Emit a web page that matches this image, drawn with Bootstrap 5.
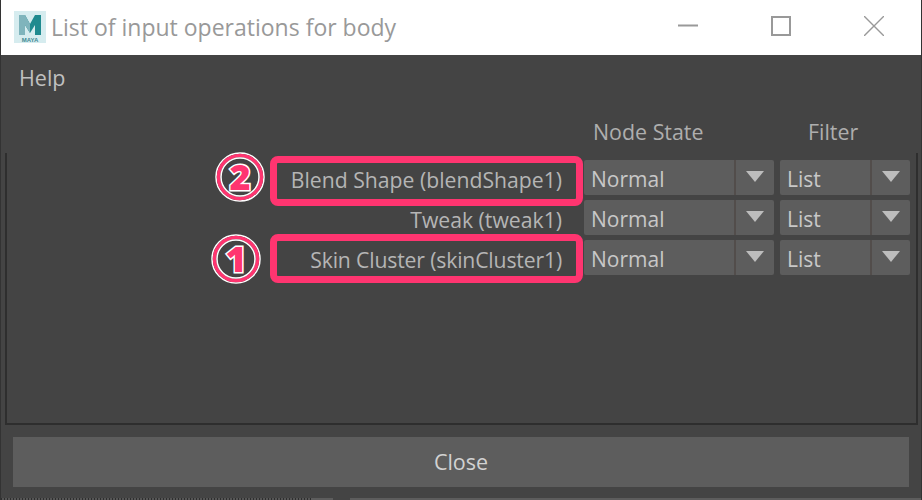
<!DOCTYPE html>
<html lang="en"><head><meta charset="utf-8"><title>List of input operations for body</title>
<link href="https://cdn.jsdelivr.net/npm/bootstrap@5.3.0/dist/css/bootstrap.min.css" rel="stylesheet">
<style>
html,body{margin:0;height:500px;overflow:hidden;background:#444}
body{font-family:"Open Sans","Noto Sans","Liberation Sans",sans-serif;font-size:21px;color:#bdbdbd;line-height:1}
.win{width:922px;height:500px;background:#444;border-left:1px solid #333;border-right:1px solid #333}
.tbar{height:55px;background:#fff;color:#999;font-size:23px}
.logo{width:32px;height:32px;margin-left:13px;margin-right:5px;flex:none;margin-top:-2px}
.logo text{font:700 6px "Liberation Sans",sans-serif;fill:#3e8a94;text-anchor:middle}
.capbtns{margin-left:auto;margin-right:1px}
.capbtn{width:93px;height:55px;padding-bottom:4px}
.helpbar{height:46px;padding-left:18px;color:#c0c0c0;font-size:21.5px}
.heads{height:52px;padding-top:20px}
.hd-node{position:absolute;left:592px;color:#aeaeae;font-size:21.4px}
.hd-filter{position:absolute;left:807px;color:#aeaeae;font-size:21.4px}
.panel{margin-left:4px;width:913px;height:272px;border:solid #2e2e2e;border-width:0 2px 2px 2px;padding-top:7px}
.oprow{height:35px;margin-bottom:5px}
.oplabel{width:556px;padding-right:1px;padding-top:4px;text-align:right;position:relative;color:#b5b5b5;flex:none;font-size:21.2px}
.lbl-tight{letter-spacing:-.16px}
.combo{height:35px;background:#5d5d5d;border-radius:2px;color:#c8c8c8;flex:none;padding-left:7px}
.c-node{width:190px;margin-left:21px}
.c-filter{width:130px;margin-left:6px}
.combo-txt{flex:1 1 auto;height:100%;border-right:2px solid #524d4b;padding-top:3px}
.combo-arr{flex:none;height:100%;padding-bottom:3px}
.c-node .combo-arr,.c-filter .combo-arr{width:38px}
.outline{position:absolute;border:7px solid #ff3570;border-radius:8px;width:313px;height:50px;left:263px;top:-4px;pointer-events:none}
.outline2{height:49px;top:-6px}
.numbadge{position:absolute;width:50px;height:50px;pointer-events:none}
.numbadge text{font:800 36px "Open Sans",sans-serif;fill:#ff3570;stroke:#fff;stroke-width:3px;paint-order:stroke;text-anchor:middle}
.nb2{left:208px;top:-8px}
.nb1{left:204px;top:-6px}
.closebtn{display:block;margin:12px 0 0 12px;width:896px;height:50px;background:#5d5d5d;border:0;border-radius:0;color:#d2d2d2;font-size:21.5px;line-height:50px;padding:0;text-align:center}
.edgebar{height:2px;margin-top:auto}
.eb-dots{width:310px;background:repeating-linear-gradient(90deg,#2e2e2e 0 1px,#555 1px 3px)}
.eb-mid{width:22px;background:#5d5d5d}
.eb-gap{width:17px;background:#444}
.eb-rest{flex:1 1 auto;background:#5d5d5d}
</style></head><body>
<div class="win d-flex flex-column">
 <div class="tbar d-flex align-items-center">
  <svg class="logo" viewBox="0 0 32 32"><rect width="32" height="32" fill="#d6ecef"/><path d="M5 4h6l5 9 5-9h6v20h-6V14l-5 8-5-8v10H5z" fill="#1f8a8f"/><path d="M5 4h6l5 9v9l-5-8v10H5z" fill="#7fb4bc"/><text x="16" y="31">MAYA</text></svg>
  <span>List of input operations for body</span>
  <div class="capbtns d-flex">
   <div class="capbtn d-flex align-items-center justify-content-center"><svg width="20" height="20" viewBox="0 0 20 20"><path d="M0 9.5h20" stroke="#999" stroke-width="2"/></svg></div>
   <div class="capbtn d-flex align-items-center justify-content-center"><svg width="20" height="20" viewBox="0 0 20 20"><rect x="1" y="1" width="18" height="18" fill="none" stroke="#999" stroke-width="2"/></svg></div>
   <div class="capbtn d-flex align-items-center justify-content-center"><svg width="20" height="20" viewBox="0 0 20 20"><path d="M0 0l20 20M20 0L0 20" stroke="#999" stroke-width="1.4"/></svg></div>
  </div>
 </div>
 <div class="helpbar d-flex align-items-center">Help</div>
 <div class="heads position-relative"><span class="hd-node">Node State</span><span class="hd-filter">Filter</span></div>
 <div class="panel">
  <div class="oprow d-flex align-items-center position-relative">
   <div class="oplabel">Blend Shape (blendShape1)</div>
   <span class="outline"></span>
   <svg class="numbadge nb2" viewBox="0 0 50 50"><circle cx="25" cy="25" r="24" fill="#444" stroke="#fff" stroke-width="1.5"/><circle cx="25" cy="25" r="21.5" fill="none" stroke="#ff3570" stroke-width="3.5"/><circle cx="25" cy="25" r="19" fill="none" stroke="#fff" stroke-width="1.5"/><text x="25" y="38">2</text></svg>
   <div class="combo c-node d-flex align-items-center"><span class="combo-txt d-flex align-items-center">Normal</span><span class="combo-arr d-flex align-items-center justify-content-center"><svg width="18" height="11" viewBox="0 0 18 11"><path d="M0 0h18L9 11z" fill="#bdbdbd"/></svg></span></div>
   <div class="combo c-filter d-flex align-items-center"><span class="combo-txt d-flex align-items-center">List</span><span class="combo-arr d-flex align-items-center justify-content-center"><svg width="18" height="11" viewBox="0 0 18 11"><path d="M0 0h18L9 11z" fill="#bdbdbd"/></svg></span></div>
  </div>
  <div class="oprow d-flex align-items-center position-relative">
   <div class="oplabel">Tweak (tweak1)</div>
   <div class="combo c-node d-flex align-items-center"><span class="combo-txt d-flex align-items-center">Normal</span><span class="combo-arr d-flex align-items-center justify-content-center"><svg width="18" height="11" viewBox="0 0 18 11"><path d="M0 0h18L9 11z" fill="#bdbdbd"/></svg></span></div>
   <div class="combo c-filter d-flex align-items-center"><span class="combo-txt d-flex align-items-center">List</span><span class="combo-arr d-flex align-items-center justify-content-center"><svg width="18" height="11" viewBox="0 0 18 11"><path d="M0 0h18L9 11z" fill="#bdbdbd"/></svg></span></div>
  </div>
  <div class="oprow d-flex align-items-center position-relative">
   <div class="oplabel lbl-tight">Skin Cluster (skinCluster1)</div>
   <span class="outline outline2"></span>
   <svg class="numbadge nb1" viewBox="0 0 50 50"><circle cx="25" cy="25" r="24" fill="#444" stroke="#fff" stroke-width="1.5"/><circle cx="25" cy="25" r="21.5" fill="none" stroke="#ff3570" stroke-width="3.5"/><circle cx="25" cy="25" r="19" fill="none" stroke="#fff" stroke-width="1.5"/><text x="25" y="38">1</text></svg>
   <div class="combo c-node d-flex align-items-center"><span class="combo-txt d-flex align-items-center">Normal</span><span class="combo-arr d-flex align-items-center justify-content-center"><svg width="18" height="11" viewBox="0 0 18 11"><path d="M0 0h18L9 11z" fill="#bdbdbd"/></svg></span></div>
   <div class="combo c-filter d-flex align-items-center"><span class="combo-txt d-flex align-items-center">List</span><span class="combo-arr d-flex align-items-center justify-content-center"><svg width="18" height="11" viewBox="0 0 18 11"><path d="M0 0h18L9 11z" fill="#bdbdbd"/></svg></span></div>
  </div>
 </div>
 <button class="btn closebtn" type="button">Close</button>
 <div class="edgebar d-flex"><span class="eb-dots"></span><span class="eb-mid"></span><span class="eb-gap"></span><span class="eb-rest"></span></div>
</div>
<script src="https://cdn.jsdelivr.net/npm/bootstrap@5.3.0/dist/js/bootstrap.bundle.min.js"></script>
</body></html>
